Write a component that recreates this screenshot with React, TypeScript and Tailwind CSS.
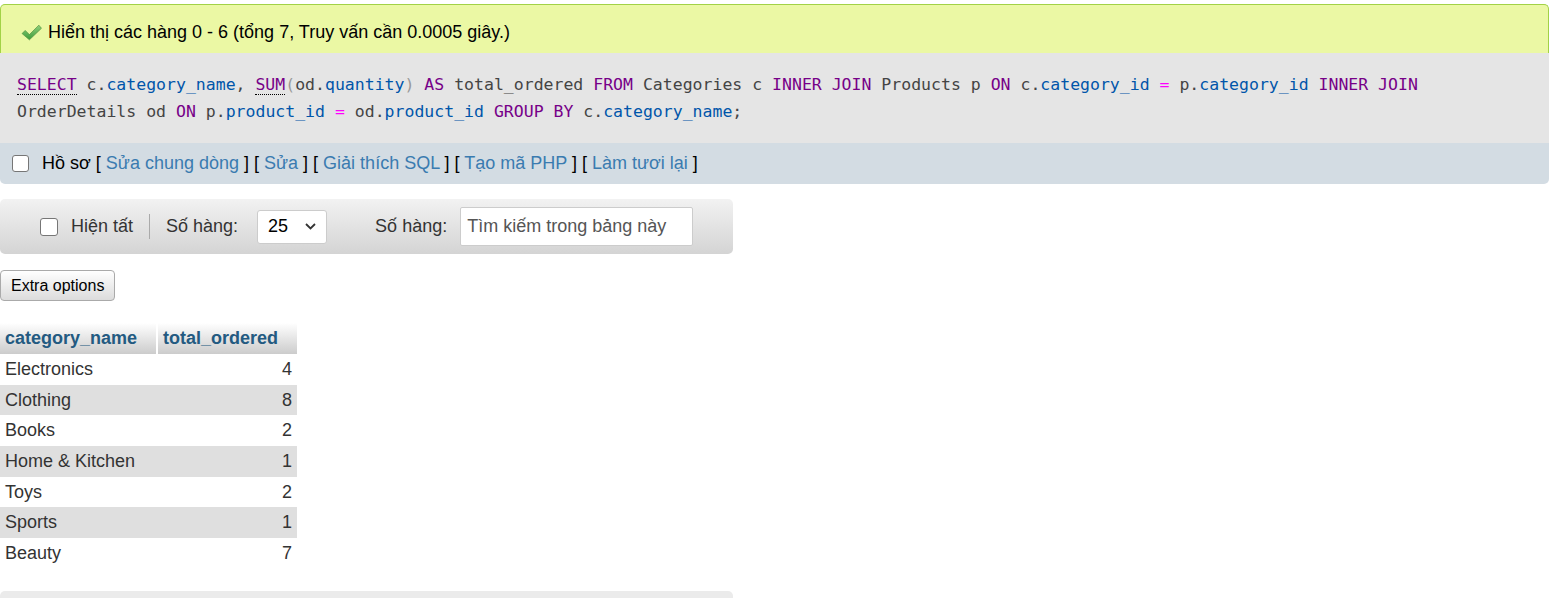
import React from "react";

const K = ({ children, u }: { children: React.ReactNode; u?: boolean }) => (
  <span className={"text-[#770088] " + (u ? "border-b border-dotted border-[#000]" : "")}>{children}</span>
);
const V = ({ children }: { children: React.ReactNode }) => <span className="text-[#0055aa]">{children}</span>;
const P = ({ children }: { children: React.ReactNode }) => <span className="text-[#999]">{children}</span>;
const O = ({ children }: { children: React.ReactNode }) => <span className="text-[#ff00ff]">{children}</span>;

function Check() {
  return (
    <svg width="21" height="17" viewBox="0 0 20 16" className="mr-[6px] shrink-0">
      <defs>
        <linearGradient id="g" x1="0" y1="0" x2="0" y2="1">
          <stop offset="0" stopColor="#8fd17a" />
          <stop offset="1" stopColor="#3d9b3a" />
        </linearGradient>
      </defs>
      <path d="M1 9 L4 6 L8 10 L17 1 L19.5 4 L8 15 Z" fill="url(#g)" stroke="#4a8a3a" strokeWidth="0.6" />
    </svg>
  );
}

function Box({ s = 16 }: { s?: number }) {
  return (
    <span
      className={
        "inline-block rounded-[3px] border border-[#767676] bg-white shrink-0 " +
        (s === 18 ? "w-[18px] h-[18px]" : "w-[17px] h-[17px]")
      }
    />
  );
}

const rows: [string, number][] = [
  ["Electronics", 4],
  ["Clothing", 8],
  ["Books", 2],
  ["Home & Kitchen", 1],
  ["Toys", 2],
  ["Sports", 1],
  ["Beauty", 7],
];

export default function App() {
  const f = { fontFamily: '"Liberation Sans", Arial, sans-serif' };
  const link = "text-[#3a7bb0]";
  return (
    <div className="w-[1554px] h-[598px] overflow-hidden bg-white text-[#333]" style={f}>
      <div className="pt-[4px] pr-[5px]">
        {/* success */}
        <div className="h-[49px] bg-[#ebf8a4] border border-b-0 border-[#a2d246] rounded-t-[5px] flex items-center pt-[6px] pl-[20px] text-[18px] text-black">
          <Check />
          <span>Hiển thị các hàng 0 - 6 (tổng 7, Truy vấn cần 0.0005 giây.)</span>
        </div>
        {/* sql */}
        <div
          className="h-[90px] bg-[#e5e5e5] pl-[17px] pt-[18px] text-[16.5px] leading-[27px] text-[#444] whitespace-pre"
          style={{ fontFamily: '"DejaVu Sans Mono", "Liberation Mono", monospace' }}
        >
          <div>
            <K u>SELECT</K> c.<V>category_name</V>, <K u>SUM</K><P>(</P>od.<V>quantity</V><P>)</P> <K>AS</K> total_ordered <K>FROM</K> Categories c <K>INNER JOIN</K> Products p <K>ON</K> c.<V>category_id</V> <O>=</O> p.<V>category_id</V> <K>INNER JOIN</K>
          </div>
          <div>
            OrderDetails od <K>ON</K> p.<V>product_id</V> <O>=</O> od.<V>product_id</V> <K>GROUP BY</K> c.<V>category_name</V>;
          </div>
        </div>
        {/* actions */}
        <div className="h-[41px] bg-[#d3dce3] rounded-b-[5px] flex items-center pl-[12px] text-[18px] text-black">
          <Box />
          <span className="ml-[13px]">Hồ sơ</span>
          <span className="ml-[5px]">
            [ <a className={link}>Sửa chung dòng</a> ] [ <a className={link}>Sửa</a> ] [ <a className={link}>Giải thích SQL</a> ] [ <a className={link}>Tạo mã PHP</a> ] [ <a className={link}>Làm tươi lại</a> ]
          </span>
        </div>
      </div>

      {/* nav */}
      <div className="mt-[15px] w-[733px] h-[55px] rounded-[5px] bg-gradient-to-b from-[#f2f2f2] to-[#d4d4d4] flex items-center text-[18px] text-[#333]">
        <span className="ml-[40px] flex"><Box s={18} /></span>
        <span className="ml-[13px]">Hiện tất</span>
        <span className="ml-[16px] w-[1px] h-[25px] bg-[#aaa]" />
        <span className="ml-[16px]">Số hàng:</span>
        <div className="ml-[19px] w-[70px] h-[34px] bg-white border border-[#ccc] rounded-[3px] flex items-center justify-between pl-[10px] pr-[10px] text-black">
          <span>25</span>
          <svg width="11" height="7" viewBox="0 0 11 7"><path d="M1 1 L5.5 5.5 L10 1" fill="none" stroke="#333" strokeWidth="1.8" /></svg>
        </div>
        <span className="ml-[48px]">Số hàng:</span>
        <div className="ml-[13px] w-[233px] h-[39px] bg-white border border-[#ccc] rounded-[2px] flex items-center pl-[6px] text-[#555]">
          Tìm kiếm trong bảng này
        </div>
      </div>

      {/* extra options */}
      <div className="mt-[16px]">
        <button className="h-[31px] px-[10px] border border-[#aaa] rounded-[4px] bg-gradient-to-b from-[#ffffff] to-[#dcdcdc] text-[16px] text-black" style={f}>
          Extra options
        </button>
      </div>

      {/* table */}
      <table className="mt-[22px] border-collapse text-[18px]">
        <thead>
          <tr className="h-[31px]">
            <th className="text-left font-bold text-[#235a81] px-[5px] bg-gradient-to-b from-[#ffffff] to-[#cccccc] border-r-2 border-white w-[157px]">category_name</th>
            <th className="text-left font-bold text-[#235a81] px-[5px] bg-gradient-to-b from-[#ffffff] to-[#cccccc] w-[140px]">total_ordered</th>
          </tr>
        </thead>
        <tbody>
          {rows.map(([n, v], i) => (
            <tr key={n} className={"h-[30.7px] " + (i % 2 ? "bg-[#dfdfdf]" : "bg-white")}>
              <td className="px-[5px] py-0">{n}</td>
              <td className="px-[5px] py-0 text-right">{v}</td>
            </tr>
          ))}
        </tbody>
      </table>

      {/* bottom nav */}
      <div className="mt-[22px] w-[733px] h-[40px] rounded-[5px] bg-[#ebebeb]" />
    </div>
  );
}
